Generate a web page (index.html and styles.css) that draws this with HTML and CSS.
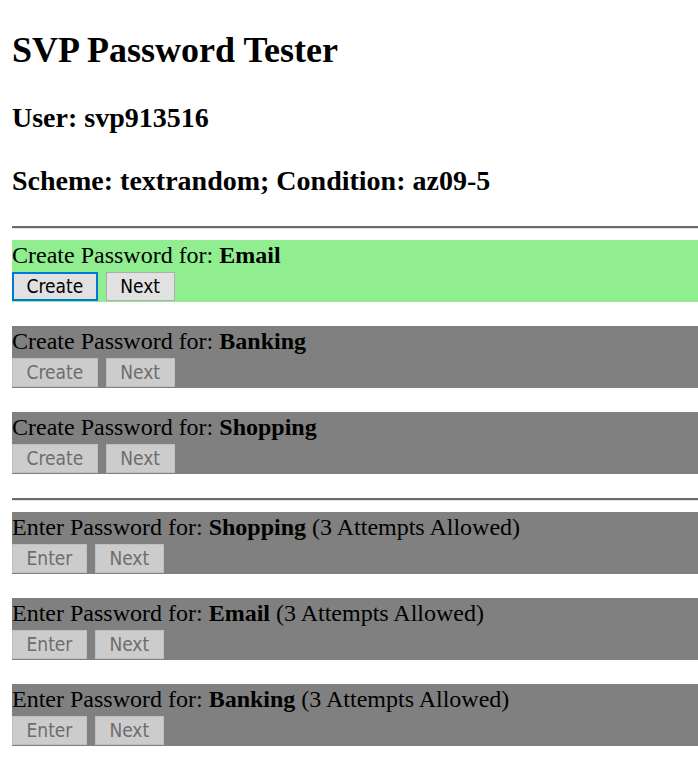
FILE: index.html
```html
<!DOCTYPE html>
<html>
<head>
<meta charset="utf-8">
<title>SVP Password Tester</title>
<link rel="stylesheet" href="styles.css">
</head>
<body>
<h1 class="title">SVP Password Tester</h1>
<h2 class="sub user">User: svp913516</h2>
<h2 class="sub scheme">Scheme: textrandom; Condition: az09-5</h2>
<hr class="rule">
<div class="task active">
  <div class="label">Create Password for: <b>Email</b></div>
  <div class="btns"><button class="btn focus">Create</button><button class="btn">Next</button></div>
</div>
<div class="task">
  <div class="label">Create Password for: <b>Banking</b></div>
  <div class="btns"><button class="btn" disabled>Create</button><button class="btn" disabled>Next</button></div>
</div>
<div class="task">
  <div class="label">Create Password for: <b>Shopping</b></div>
  <div class="btns"><button class="btn" disabled>Create</button><button class="btn" disabled>Next</button></div>
</div>
<hr class="rule">
<div class="task">
  <div class="label">Enter Password for: <b>Shopping</b> (3 Attempts Allowed)</div>
  <div class="btns"><button class="btn" disabled>Enter</button><button class="btn" disabled>Next</button></div>
</div>
<div class="task">
  <div class="label">Enter Password for: <b>Email</b> (3 Attempts Allowed)</div>
  <div class="btns"><button class="btn" disabled>Enter</button><button class="btn" disabled>Next</button></div>
</div>
<div class="task">
  <div class="label">Enter Password for: <b>Banking</b> (3 Attempts Allowed)</div>
  <div class="btns"><button class="btn" disabled>Enter</button><button class="btn" disabled>Next</button></div>
</div>
</body>
</html>
```
FILE: styles.css
```css
html, body {
  background: #ffffff;
}
body {
  margin: 0;
  padding: 0 0 0 12px;
  font-family: "Liberation Serif", "Times New Roman", serif;
  font-size: 24px;
  color: #000;
}
.title {
  font-size: 36px;
  line-height: 40px;
  font-weight: bold;
  margin: 30px 0 0;
}
.sub {
  font-size: 28px;
  line-height: 31px;
  font-weight: bold;
  margin: 0;
}
.user {
  margin-top: 32px;
}
.scheme {
  margin-top: 32px;
  margin-bottom: 30px;
}
.rule {
  border: 0;
  height: 0;
  border-top: 2px solid #6b6b6b;
  border-bottom: 1px solid #e3e3e3;
  margin: 0 0 11px;
}
.task {
  background: #808080;
  height: 62px;
  margin-bottom: 24px;
  box-sizing: border-box;
}
.task.active {
  background: #90ee90;
}
.label {
  line-height: 31px;
  height: 29px;
}
.btns {
  display: flex;
  gap: 8px;
  margin-top: 3px;
}
.btn {
  font-family: "DejaVu Sans Condensed", "DejaVu Sans", sans-serif;
  font-stretch: condensed;
  font-size: 19px;
  height: 29px;
  line-height: 25px;
  box-sizing: border-box;
  padding: 0 13.5px;
  margin: 0;
  background: #e1e1e1;
  color: #000;
  border: 1px solid #adadad;
  border-radius: 0;
}
.btn.focus {
  border: 2px solid #0078d7;
  padding: 0 12.5px;
}
.btn:disabled {
  background: #cccccc;
  color: #6d6d6d;
  border-color: #bfbfbf;
}
```
